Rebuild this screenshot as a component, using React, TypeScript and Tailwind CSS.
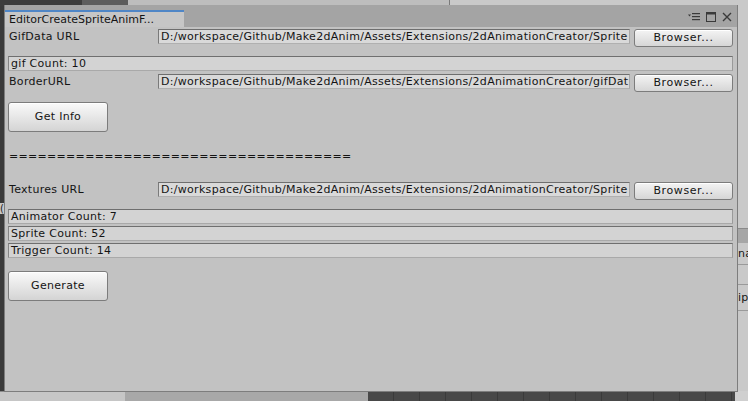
import React from "react";

const font = { fontFamily: '"DejaVu Sans", Verdana, sans-serif' };

function PathField({ value }: { value: string }) {
  return (
    <div className="w-[472px] h-[15px] shrink-0 overflow-hidden whitespace-nowrap bg-[#d9d9d9] border border-t-[#6e6e6e] border-l-[#7a7a7a] border-r-[#a8a8a8] border-b-[#b0b0b0] pl-[2px] text-[11px] leading-[13px] text-[#141414]">
      {value}
    </div>
  );
}

function BrowseButton() {
  return (
    <button className="w-[99px] h-[18px] shrink-0 rounded-[3px] border border-[#7c7c7c] bg-gradient-to-b from-[#f4f4f4] to-[#d6d6d6] text-[11px] leading-[14px] tracking-[0.6px] text-[#141414] shadow-[inset_0_1px_0_#ffffff]">
      Browser...
    </button>
  );
}

function UrlRow({ label, value }: { label: string; value: string }) {
  return (
    <div className="flex items-start">
      <div className="w-[150px] shrink-0 pl-[1px] text-[11px] leading-[15px] text-[#141414]">{label}</div>
      <PathField value={value} />
      <div className="w-[4px] shrink-0" />
      <BrowseButton />
    </div>
  );
}

function InfoBox({ text }: { text: string }) {
  return (
    <div className="h-[15px] bg-[#d3d3d3] border border-t-[#6f6f6f] border-l-[#858585] border-r-[#9a9a9a] border-b-[#a9a9a9] pl-[2px] text-[11px] leading-[13px] text-[#141414]">
      {text}
    </div>
  );
}

function BigButton({ label }: { label: string }) {
  return (
    <button className="w-[100px] h-[30px] rounded-[3px] border border-[#7c7c7c] bg-gradient-to-b from-[#fafafa] to-[#d4d4d4] text-[11px] text-[#141414] shadow-[inset_0_1px_0_#ffffff]">
      {label}
    </button>
  );
}

function MenuIcon() {
  return (
    <svg width="12" height="9" viewBox="0 0 12 9">
      <path d="M0 2.5 L3 2.5 L1.5 4.5 Z" fill="#3a3a3a" />
      <rect x="4" y="1" width="8" height="1.2" fill="#3a3a3a" />
      <rect x="4" y="4" width="8" height="1.2" fill="#3a3a3a" />
      <rect x="4" y="7" width="8" height="1.2" fill="#3a3a3a" />
    </svg>
  );
}

function MaxIcon() {
  return (
    <svg width="10" height="10" viewBox="0 0 10 10">
      <rect x="0.5" y="0.5" width="9" height="9" fill="none" stroke="#3a3a3a" strokeWidth="1" />
      <rect x="0.5" y="0.5" width="9" height="2" fill="#3a3a3a" />
    </svg>
  );
}

function CloseIcon() {
  return (
    <svg width="10" height="10" viewBox="0 0 10 10">
      <path d="M1 1 L9 9 M9 1 L1 9" stroke="#3a3a3a" strokeWidth="1.4" />
    </svg>
  );
}

export default function App() {
  const path1 = "D:/workspace/Github/Make2dAnim/Assets/Extensions/2dAnimationCreator/Sprite";
  const path2 = "D:/workspace/Github/Make2dAnim/Assets/Extensions/2dAnimationCreator/gifDat";
  return (
    <div className="relative w-[748px] h-[401px] overflow-hidden bg-[#3a3a3a] tracking-[0.3px]" style={font}>
      {/* editor panels behind the floating window */}
      <div className="absolute left-0 top-0 w-[748px] h-[6px] flex">
        <div className="w-[82px] bg-[#3c3c3c]" />
        <div className="w-[46px] bg-[#5c5c5c]" />
        <div className="w-[322px] bg-[#bdbdbd] border-r border-[#7a7a7a]" />
        <div className="flex-1 bg-[#c9c9c9]" />
      </div>
      <div className="absolute left-[738px] top-0 w-[10px] h-[401px] flex flex-col bg-[#c9c9c9] text-[11px] text-[#141414] overflow-hidden">
        <div className="h-[228px]" />
        <div className="h-[15px] bg-[#a6a6a6] border-t border-[#8a8a8a]" />
        <div className="h-[22px] border-b border-[#9a9a9a] leading-[22px] whitespace-nowrap">na</div>
        <div className="h-[20px] border-b border-[#9a9a9a]" />
        <div className="h-[26px] border-b border-[#9a9a9a] leading-[26px] whitespace-nowrap">ip</div>
      </div>
      <div className="absolute left-0 top-[391px] w-[748px] h-[10px] flex">
        <div className="w-[125px] bg-[#c6c6c6] border-t border-[#8a8a8a]" />
        <div className="w-[243px] bg-[#a8a8a8]" />
        <div className="w-[367px] bg-[#484848] bg-[repeating-linear-gradient(90deg,#484848_0,#484848_25px,#3a3a3a_25px,#3a3a3a_26px)]" />
        <div className="flex-1 bg-[#cfcfcf]" />
      </div>
      <div className="absolute left-0 top-[203px] w-[4px] h-[11px] bg-[#c8c8c8] text-[10px] leading-[11px] text-[#222] overflow-hidden">
        (
      </div>

      {/* floating editor window */}
      <div className="absolute left-[4px] top-[5px] w-[734px] h-[387px] flex flex-col bg-[#c2c2c2] border border-[#7d7d7d] border-t-0">
        <div className="h-[22px] shrink-0 flex items-end bg-[#a4a4a4]">
          <div className="w-[179px] h-[17px] bg-[#c6c6c6] border-t-2 border-[#4f86c6] pl-[4px] text-[11px] leading-[15px] tracking-normal text-[#141414] whitespace-nowrap">
            EditorCreateSpriteAnimF...
          </div>
          <div className="flex-1" />
          <div className="flex items-center gap-[6px] self-center pr-[5px] pt-[1px]">
            <MenuIcon />
            <MaxIcon />
            <CloseIcon />
          </div>
        </div>

        <div className="flex flex-col pl-[3px] pr-[4px]">
          <div className="mt-[2px]">
            <UrlRow label="GifData URL" value={path1} />
          </div>
          <div className="mt-[9px]">
            <InfoBox text="gif Count: 10" />
          </div>
          <div className="mt-[3px]">
            <UrlRow label="BorderURL" value={path2} />
          </div>
          <div className="mt-[10px]">
            <BigButton label="Get Info" />
          </div>
          <div className="mt-[18px] pl-[1px] text-[11px] leading-[14px] text-[#141414] whitespace-nowrap">
            ====================================
          </div>
          <div className="mt-[18px]">
            <UrlRow label="Textures URL" value={path1} />
          </div>
          <div className="mt-[9px] flex flex-col gap-[2px]">
            <InfoBox text="Animator Count: 7" />
            <InfoBox text="Sprite Count: 52" />
            <InfoBox text="Trigger Count: 14" />
          </div>
          <div className="mt-[13px]">
            <BigButton label="Generate" />
          </div>
        </div>
      </div>
    </div>
  );
}
